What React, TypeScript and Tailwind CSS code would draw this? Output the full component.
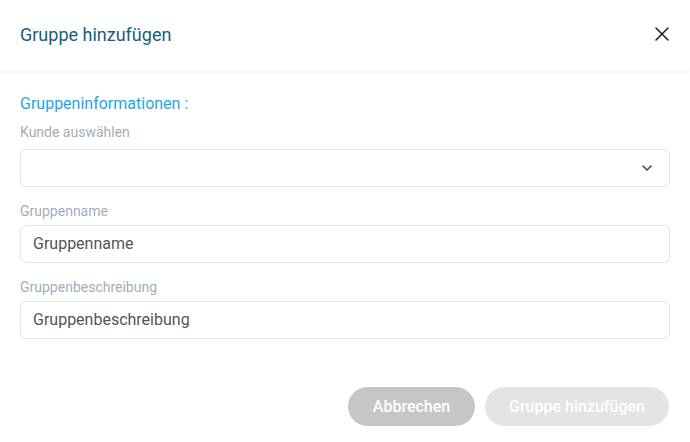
import React from "react";

export default function App() {
  return (
    <div className="w-[690px] h-[442px] bg-white overflow-hidden" style={{ fontFamily: "Roboto, 'Liberation Sans', sans-serif" }}>
      <div className="h-[70px] flex items-center justify-between pl-5 pr-5 shadow-[0_2px_6px_rgba(0,0,0,0.06)] relative">
        <span className="text-[18px] text-[#15607d] -mt-[2px]">Gruppe hinzufügen</span>
        <svg width="16" height="16" viewBox="0 0 16 16" className="-mt-[3px]">
          <path d="M2 2 L14 14 M14 2 L2 14" stroke="#222" strokeWidth="1.6" strokeLinecap="round" />
        </svg>
      </div>
      <div className="px-5 pt-[24px]">
        <div className="text-[16px] text-[#1ea6e6] leading-[20px]">Gruppeninformationen :</div>
        <div className="mt-[10px] text-[14px] text-[#a0aebb] leading-[16px]">Kunde auswählen</div>
        <div className="mt-[9px] h-[38px] border border-[#dfe2e6] rounded-[6px] flex items-center justify-end pr-[17px]">
          <svg width="10" height="6" viewBox="0 0 10 6">
            <path d="M1 1 L5 5 L9 1" stroke="#444" strokeWidth="1.5" fill="none" strokeLinecap="round" strokeLinejoin="round" />
          </svg>
        </div>
        <div className="mt-[16px] text-[14px] text-[#a0aebb] leading-[16px]">Gruppenname</div>
        <div className="mt-[6px] h-[38px] border border-[#dfe2e6] rounded-[6px] flex items-center px-3 text-[16px] text-[#555]">Gruppenname</div>
        <div className="mt-[16px] text-[14px] text-[#a0aebb] leading-[16px]">Gruppenbeschreibung</div>
        <div className="mt-[6px] h-[38px] border border-[#dfe2e6] rounded-[6px] flex items-center px-3 text-[16px] text-[#555]">Gruppenbeschreibung</div>
        <div className="mt-[48px] flex justify-end gap-[10px] pr-[1px]">
          <div className="h-[39px] w-[127px] rounded-full bg-[#c6c6c6] text-white text-[16px] font-medium flex items-center justify-center">Abbrechen</div>
          <div className="h-[39px] w-[184px] rounded-full bg-[#e4e4e4] text-white text-[16px] font-medium flex items-center justify-center">Gruppe hinzufügen</div>
        </div>
      </div>
    </div>
  );
}
